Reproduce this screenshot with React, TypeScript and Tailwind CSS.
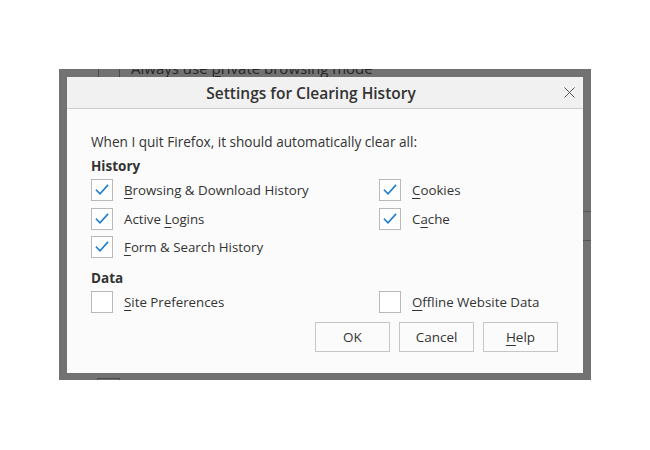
import React from "react";

function Check() {
  return (
    <svg width="14" height="12" viewBox="0 0 14 12" fill="none">
      <path d="M1.5 6.2 L5 9.8 L12.5 1.5" stroke="#1f7fcf" strokeWidth="1.6" strokeLinecap="square" />
    </svg>
  );
}

function Box({ checked }: { checked: boolean }) {
  return (
    <div className="w-[22px] h-[22px] border border-[#b9b9b9] bg-white flex items-center justify-center shrink-0">
      {checked ? <Check /> : null}
    </div>
  );
}

function Item({ checked, pre, key1, post }: { checked: boolean; pre: string; key1: string; post: string }) {
  return (
    <div className="flex items-center gap-[11px] h-[28.5px]">
      <Box checked={checked} />
      <span className="text-[13.3px] leading-[20px] text-[#333]">
        {pre}
        <span className="underline underline-offset-[3px] decoration-1">{key1}</span>
        {post}
      </span>
    </div>
  );
}

function Btn({ children }: { children: React.ReactNode }) {
  return (
    <div className="w-[75px] h-[30px] border border-[#c6c6c6] bg-[#fbfbfb] flex items-center justify-center text-[13.5px] text-[#333]">
      {children}
    </div>
  );
}

export default function App() {
  return (
    <div className="w-[650px] h-[450px] bg-white overflow-hidden font-['Open_Sans',sans-serif] pt-[69px] pl-[59px]">
      <div className="relative w-[532px] h-[311px] bg-[#727272] overflow-hidden pt-[8px] pl-[8px]">
        {/* underlying preferences window, darkened */}
        <div className="absolute left-[39px] top-[-12px] w-[22px] h-[22px] border border-[#4a4a4a]" />
        <div className="absolute left-[72px] top-[-11px] text-[15px] leading-[20px] text-[#262626] whitespace-nowrap">
          Always use <span className="underline underline-offset-[2px]">p</span>rivate browsing mode
        </div>
        <div className="absolute left-[524px] top-[142px] w-[8px] h-px bg-[#555]" />
        <div className="absolute left-[524px] top-[171px] w-[8px] h-px bg-[#555]" />
        <div className="absolute left-[38px] top-[309px] w-[23px] h-[22px] border border-[#4a4a4a]" />

        <div className="relative z-10 w-[516px] h-[296px] bg-[#fbfbfb] flex flex-col">
          <div className="h-[32px] bg-[#f1f1f1] border-b border-[#cdcdcd] flex items-center">
            <div className="flex-1 text-center text-[15.5px] font-semibold text-[#333] leading-[20px] pt-[1px]">
              Settings for Clearing History
            </div>
            <div className="w-[28px] flex items-center justify-center">
              <svg width="11" height="11" viewBox="0 0 11 11">
                <path d="M0.5 0.5 L10.5 10.5 M10.5 0.5 L0.5 10.5" stroke="#555" strokeWidth="1" />
              </svg>
            </div>
          </div>
          <div className="pl-[24px] pr-[25px] pt-[23px] flex flex-col">
            <div className="text-[13.6px] leading-[20px] text-[#333]">
              When I quit Firefox, it should automatically clear all:
            </div>
            <div className="mt-[4px] text-[13.5px] leading-[20px] font-bold text-[#333]">History</div>
            <div className="grid grid-cols-[288px_1fr]">
              <Item checked pre="" key1="B" post="rowsing & Download History" />
              <Item checked pre="" key1="C" post="ookies" />
              <Item checked pre="Active " key1="L" post="ogins" />
              <Item checked pre="C" key1="a" post="che" />
              <Item checked pre="" key1="F" post="orm & Search History" />
              <div />
            </div>
            <div className="mt-[6px] text-[13.5px] leading-[20px] font-bold text-[#333]">Data</div>
            <div className="grid grid-cols-[288px_1fr]">
              <Item checked={false} pre="" key1="S" post="ite Preferences" />
              <Item checked={false} pre="" key1="O" post="ffline Website Data" />
            </div>
            <div className="mt-[6px] flex justify-end gap-[9px]">
              <Btn>OK</Btn>
              <Btn>Cancel</Btn>
              <Btn>
                <span className="underline underline-offset-[3px] decoration-1">H</span>elp
              </Btn>
            </div>
          </div>
        </div>
      </div>
    </div>
  );
}
